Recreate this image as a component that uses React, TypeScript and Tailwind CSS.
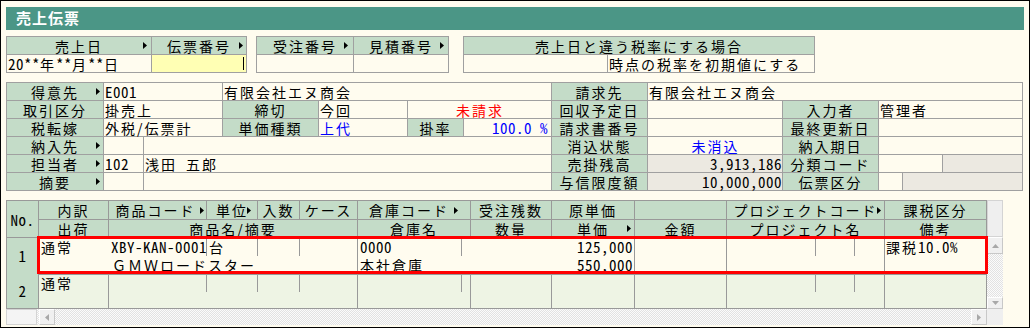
import React from "react";

type Kids = { children?: React.ReactNode };

// half-width run inside Japanese text
function H({ children }: Kids) {
  return (
    <span className="text-[15px] tracking-[0.5px] [font-feature-settings:'hwid']">{children}</span>
  );
}

function Tri({ className = "" }: { className?: string }) {
  return (
    <svg width="4" height="7" viewBox="0 0 4 7" className={className}>
      <path d="M0 0L4 3.5L0 7Z" fill="#000" />
    </svg>
  );
}

type LblProps = Kids & { ar?: string; className?: string };

function Lbl({ children, ar, className = "" }: LblProps) {
  return (
    <div
      className={`relative flex items-center justify-center whitespace-nowrap bg-[#c4dcc8] leading-none ${className}`}
    >
      <span>{children}</span>
      {ar && <Tri className={`absolute top-[5px] ${ar}`} />}
    </div>
  );
}

type ValProps = Kids & { bg?: string; className?: string };

function Val({ children, bg = "bg-[#fffcef]", className = "" }: ValProps) {
  return (
    <div className={`flex items-center whitespace-nowrap pl-px leading-none ${bg} ${className}`}>
      {children}
    </div>
  );
}

type Dir = "up" | "down" | "left" | "right";

function ScrollBtn({ dir, className = "" }: { dir: Dir; className?: string }) {
  const d = {
    up: "M0 4L3.5 0L7 4Z",
    down: "M0 0L7 0L3.5 4Z",
    left: "M4 0L4 7L0 3.5Z",
    right: "M0 0L4 3.5L0 7Z",
  }[dir];
  const vert = dir === "up" || dir === "down";
  return (
    <div
      className={`flex items-center justify-center border border-t-white border-l-white border-r-[#c8c8c8] border-b-[#c8c8c8] bg-[#f0f0f0] ${className}`}
    >
      <svg width={vert ? 7 : 4} height={vert ? 4 : 7} viewBox={vert ? "0 0 7 4" : "0 0 4 7"}>
        <path d={d} fill="#a8a8a8" />
      </svg>
    </div>
  );
}

const th =
  "relative flex items-center justify-center whitespace-nowrap border-r border-b border-[#999] bg-[#c4dcc8] leading-none";
const cols =
  "grid grid-cols-[32px_70px_98px_51px_42px_58px_113px_81px_83px_92px_158px_102px]";
const dither =
  "bg-[repeating-conic-gradient(#e2e2e2_0%_25%,#fbfbfb_0%_50%)] bg-[length:2px_2px]";

function DataRow({ no, first }: { no: string; first?: boolean }) {
  const bg = first ? "bg-[#fffcef]" : "bg-[#eef4e4]";
  const h = first ? "h-[36px]" : "h-[35px]";
  const sub = "h-[18px] border-r border-[#999]";
  return (
    <div className={`${cols} ${h} ${bg} leading-[18px]`}>
      <div className="flex items-center justify-center border-r border-b border-[#999] bg-[#c4dcc8]">
        <H>{no}</H>
      </div>
      <div className={`border-b border-[#999] pl-[2px] ${first ? "" : "border-r"}`}>通常</div>
      <div className="col-span-4 flex flex-col border-r border-b border-[#999]">
        <div className="grid grid-cols-[98px_51px_42px_1fr]">
          <div className={`${sub} whitespace-nowrap pl-[2px]`}>
            {first && <H>XBY-KAN-0001</H>}
          </div>
          <div className={`${sub} pl-[2px]`}>{first && "台"}</div>
          <div className={sub} />
          <div />
        </div>
        <div className="pl-[3px] whitespace-nowrap">{first && "ＧＭＷロードスター"}</div>
      </div>
      <div className={`flex flex-col border-b border-[#999] ${first ? "" : "border-r"}`}>
        <div className="grid grid-cols-[104px_1fr]">
          <div className={`${sub} pl-[2px]`}>{first && <H>0000</H>}</div>
          <div />
        </div>
        <div className="pl-[2px]">{first && "本社倉庫"}</div>
      </div>
      <div className={`border-b border-[#999] ${first ? "" : "border-r"}`} />
      <div className="flex flex-col items-end border-r border-b border-[#999] pr-[1px]">
        {first && (
          <>
            <H>125,000</H>
            <H>550,000</H>
          </>
        )}
      </div>
      <div className="border-r border-b border-[#999]" />
      <div className="border-r border-b border-[#999]">
        <div className="grid grid-cols-[89px_39px_1fr]">
          <div className={sub} />
          <div className={sub} />
          <div />
        </div>
      </div>
      <div className="border-r border-b border-[#999] pl-[1px] whitespace-nowrap">
        {first && (
          <>
            課税<H>10.0%</H>
          </>
        )}
      </div>
    </div>
  );
}

export default function App() {
  return (
    <div className="h-[330px] w-[1030px] bg-white font-['Noto_Sans_CJK_JP',sans-serif] text-[14px] tracking-[2px] text-black">
      <div className="flex h-[328px] w-[1030px] flex-col border border-black bg-[#fffcef] px-[5px] pt-[6px]">
        <div className="flex h-[23px] shrink-0 items-center bg-[#4b9686] pl-[10px] text-[15px] font-bold tracking-[1px] text-white">
          売上伝票
        </div>

        {/* 伝票ヘッダ */}
        <div className="mt-[6px] flex items-start">
          <div className="grid grid-cols-[144px_94px] grid-rows-[17px_17px] gap-px bg-[#a0a0a0] p-px">
            <Lbl ar="right-[4px]">売上日</Lbl>
            <Lbl ar="right-[3px]">伝票番号</Lbl>
            <Val>
              <H>20**</H>年<H>**</H>月<H>**</H>日
            </Val>
            <Val bg="bg-[#ffffb4]" className="justify-end pr-[2px]">
              <span className="h-[13px] w-px bg-black" />
            </Val>
          </div>
          <div className="ml-[9px] grid grid-cols-[96px_94px] grid-rows-[17px_17px] gap-px bg-[#a0a0a0] p-px">
            <Lbl ar="right-[5px]">受注番号</Lbl>
            <Lbl ar="right-[4px]">見積番号</Lbl>
            <Val />
            <Val />
          </div>
          <div className="ml-[14px] grid grid-cols-[143px_206px] grid-rows-[17px_17px] gap-px bg-[#a0a0a0] p-px">
            <Lbl className="col-span-2">売上日と違う税率にする場合</Lbl>
            <Val />
            <Val>時点の税率を初期値にする</Val>
          </div>
        </div>

        {/* 得意先・請求先 */}
        <div className="mt-[9px] grid w-[1017px] grid-cols-[96px_39px_78px_95px_88px_55px_87px_95px_134px_95px_23px_39px_79px] grid-rows-[repeat(6,17px)] gap-px bg-[#a0a0a0] p-px">
          <Lbl ar="right-[3px]">得意先</Lbl>
          <Val className="col-span-2">
            <H>E001</H>
          </Val>
          <Val className="col-span-4 pl-[2px]">有限会社エヌ商会</Val>
          <Lbl>請求先</Lbl>
          <Val className="col-span-5">有限会社エヌ商会</Val>

          <Lbl>取引区分</Lbl>
          <Val className="col-span-2">掛売上</Val>
          <Lbl>締切</Lbl>
          <Val>今回</Val>
          <Val className="col-span-2 justify-center text-[#ff0000]">未請求</Val>
          <Lbl>回収予定日</Lbl>
          <Val />
          <Lbl>入力者</Lbl>
          <Val className="col-span-3 pl-[2px]">管理者</Val>

          <Lbl>税転嫁</Lbl>
          <Val className="col-span-2">外税/伝票計</Val>
          <Lbl>単価種類</Lbl>
          <Val className="text-[#0000ff]">上代</Val>
          <Lbl>掛率</Lbl>
          <Val className="justify-end pr-[3px] text-[#0000ff]">
            <H>100.0 %</H>
          </Val>
          <Lbl>請求書番号</Lbl>
          <Val />
          <Lbl>最終更新日</Lbl>
          <Val className="col-span-3" />

          <Lbl ar="right-[3px]">納入先</Lbl>
          <Val />
          <Val className="col-span-5" />
          <Lbl>消込状態</Lbl>
          <Val className="justify-center text-[#0000ff]">未消込</Val>
          <Lbl>納入期日</Lbl>
          <Val className="col-span-3" />

          <Lbl ar="right-[3px]">担当者</Lbl>
          <Val>
            <H>102</H>
          </Val>
          <Val className="col-span-5">浅田{"\u2002"}五郎</Val>
          <Lbl>売掛残高</Lbl>
          <Val bg="bg-[#ece9e1]" className="justify-end pr-0">
            <H>3,913,186</H>
          </Val>
          <Lbl>分類コード</Lbl>
          <Val className="col-span-2" />
          <Val bg="bg-[#ece9e1]" />

          <Lbl ar="right-[3px]">摘要</Lbl>
          <Val />
          <Val className="col-span-5" />
          <Lbl>与信限度額</Lbl>
          <Val bg="bg-[#ece9e1]" className="justify-end pr-0">
            <H>10,000,000</H>
          </Val>
          <Lbl>伝票区分</Lbl>
          <Val />
          <Val bg="bg-[#ece9e1]" className="col-span-2" />
        </div>

        {/* 明細 */}
        <div className="relative mt-[9px] flex w-[997px] flex-col">
          <div className="flex">
            <div className="w-[981px] border-t border-l border-[#999]">
              <div className={`${cols} grid-rows-[19px_18px]`}>
                <div className={`${th} row-span-2`}>
                  <H>No.</H>
                </div>
                <div className={th}>内訳</div>
                <div className={`${th} pr-[4px]`}>
                  商品コード
                  <Tri className="absolute top-[6px] right-[2px]" />
                </div>
                <div className={th}>
                  単位
                  <Tri className="absolute top-[6px] right-[6px]" />
                </div>
                <div className={th}>入数</div>
                <div className={th}>ケース</div>
                <div className={`${th} pr-[10px]`}>
                  倉庫コード
                  <Tri className="absolute top-[6px] right-[12px]" />
                </div>
                <div className={th}>受注残数</div>
                <div className={th}>原単価</div>
                <div className={th} />
                <div className={th}>
                  プロジェクトコード
                  <Tri className="absolute top-[6px] right-[3px]" />
                </div>
                <div className={th}>課税区分</div>

                <div className={th}>出荷</div>
                <div className={`${th} col-span-4`}>商品名/摘要</div>
                <div className={th}>倉庫名</div>
                <div className={th}>数量</div>
                <div className={th}>
                  単価
                  <Tri className="absolute top-[5px] right-[3px]" />
                </div>
                <div className={th}>金額</div>
                <div className={th}>プロジェクト名</div>
                <div className={th}>備考</div>
              </div>
              <DataRow no="1" first />
              <DataRow no="2" />
            </div>

            <div className="flex h-[109px] w-[16px] flex-col">
              <div className="h-[37px] border border-[#d4d4d4] bg-[#efefef]" />
              <ScrollBtn dir="up" className="h-[17px]" />
              <div className={`flex-1 ${dither}`} />
              <ScrollBtn dir="down" className="h-[12px]" />
            </div>
          </div>

          <div className="flex h-[16px]">
            <div className="w-[31px] border border-[#d4d4d4] bg-[#f4f4f4]" />
            <div className={`w-[2px] ${dither}`} />
            <ScrollBtn dir="left" className="w-[16px]" />
            <div className={`flex-1 ${dither}`} />
            <ScrollBtn dir="right" className="w-[16px]" />
            <div className="w-[16px] bg-[#efefef]" />
          </div>

          <div className="pointer-events-none absolute top-[36px] left-[31px] h-[38px] w-[951px] border-[3px] border-[#ff0000]" />
        </div>
      </div>
    </div>
  );
}
